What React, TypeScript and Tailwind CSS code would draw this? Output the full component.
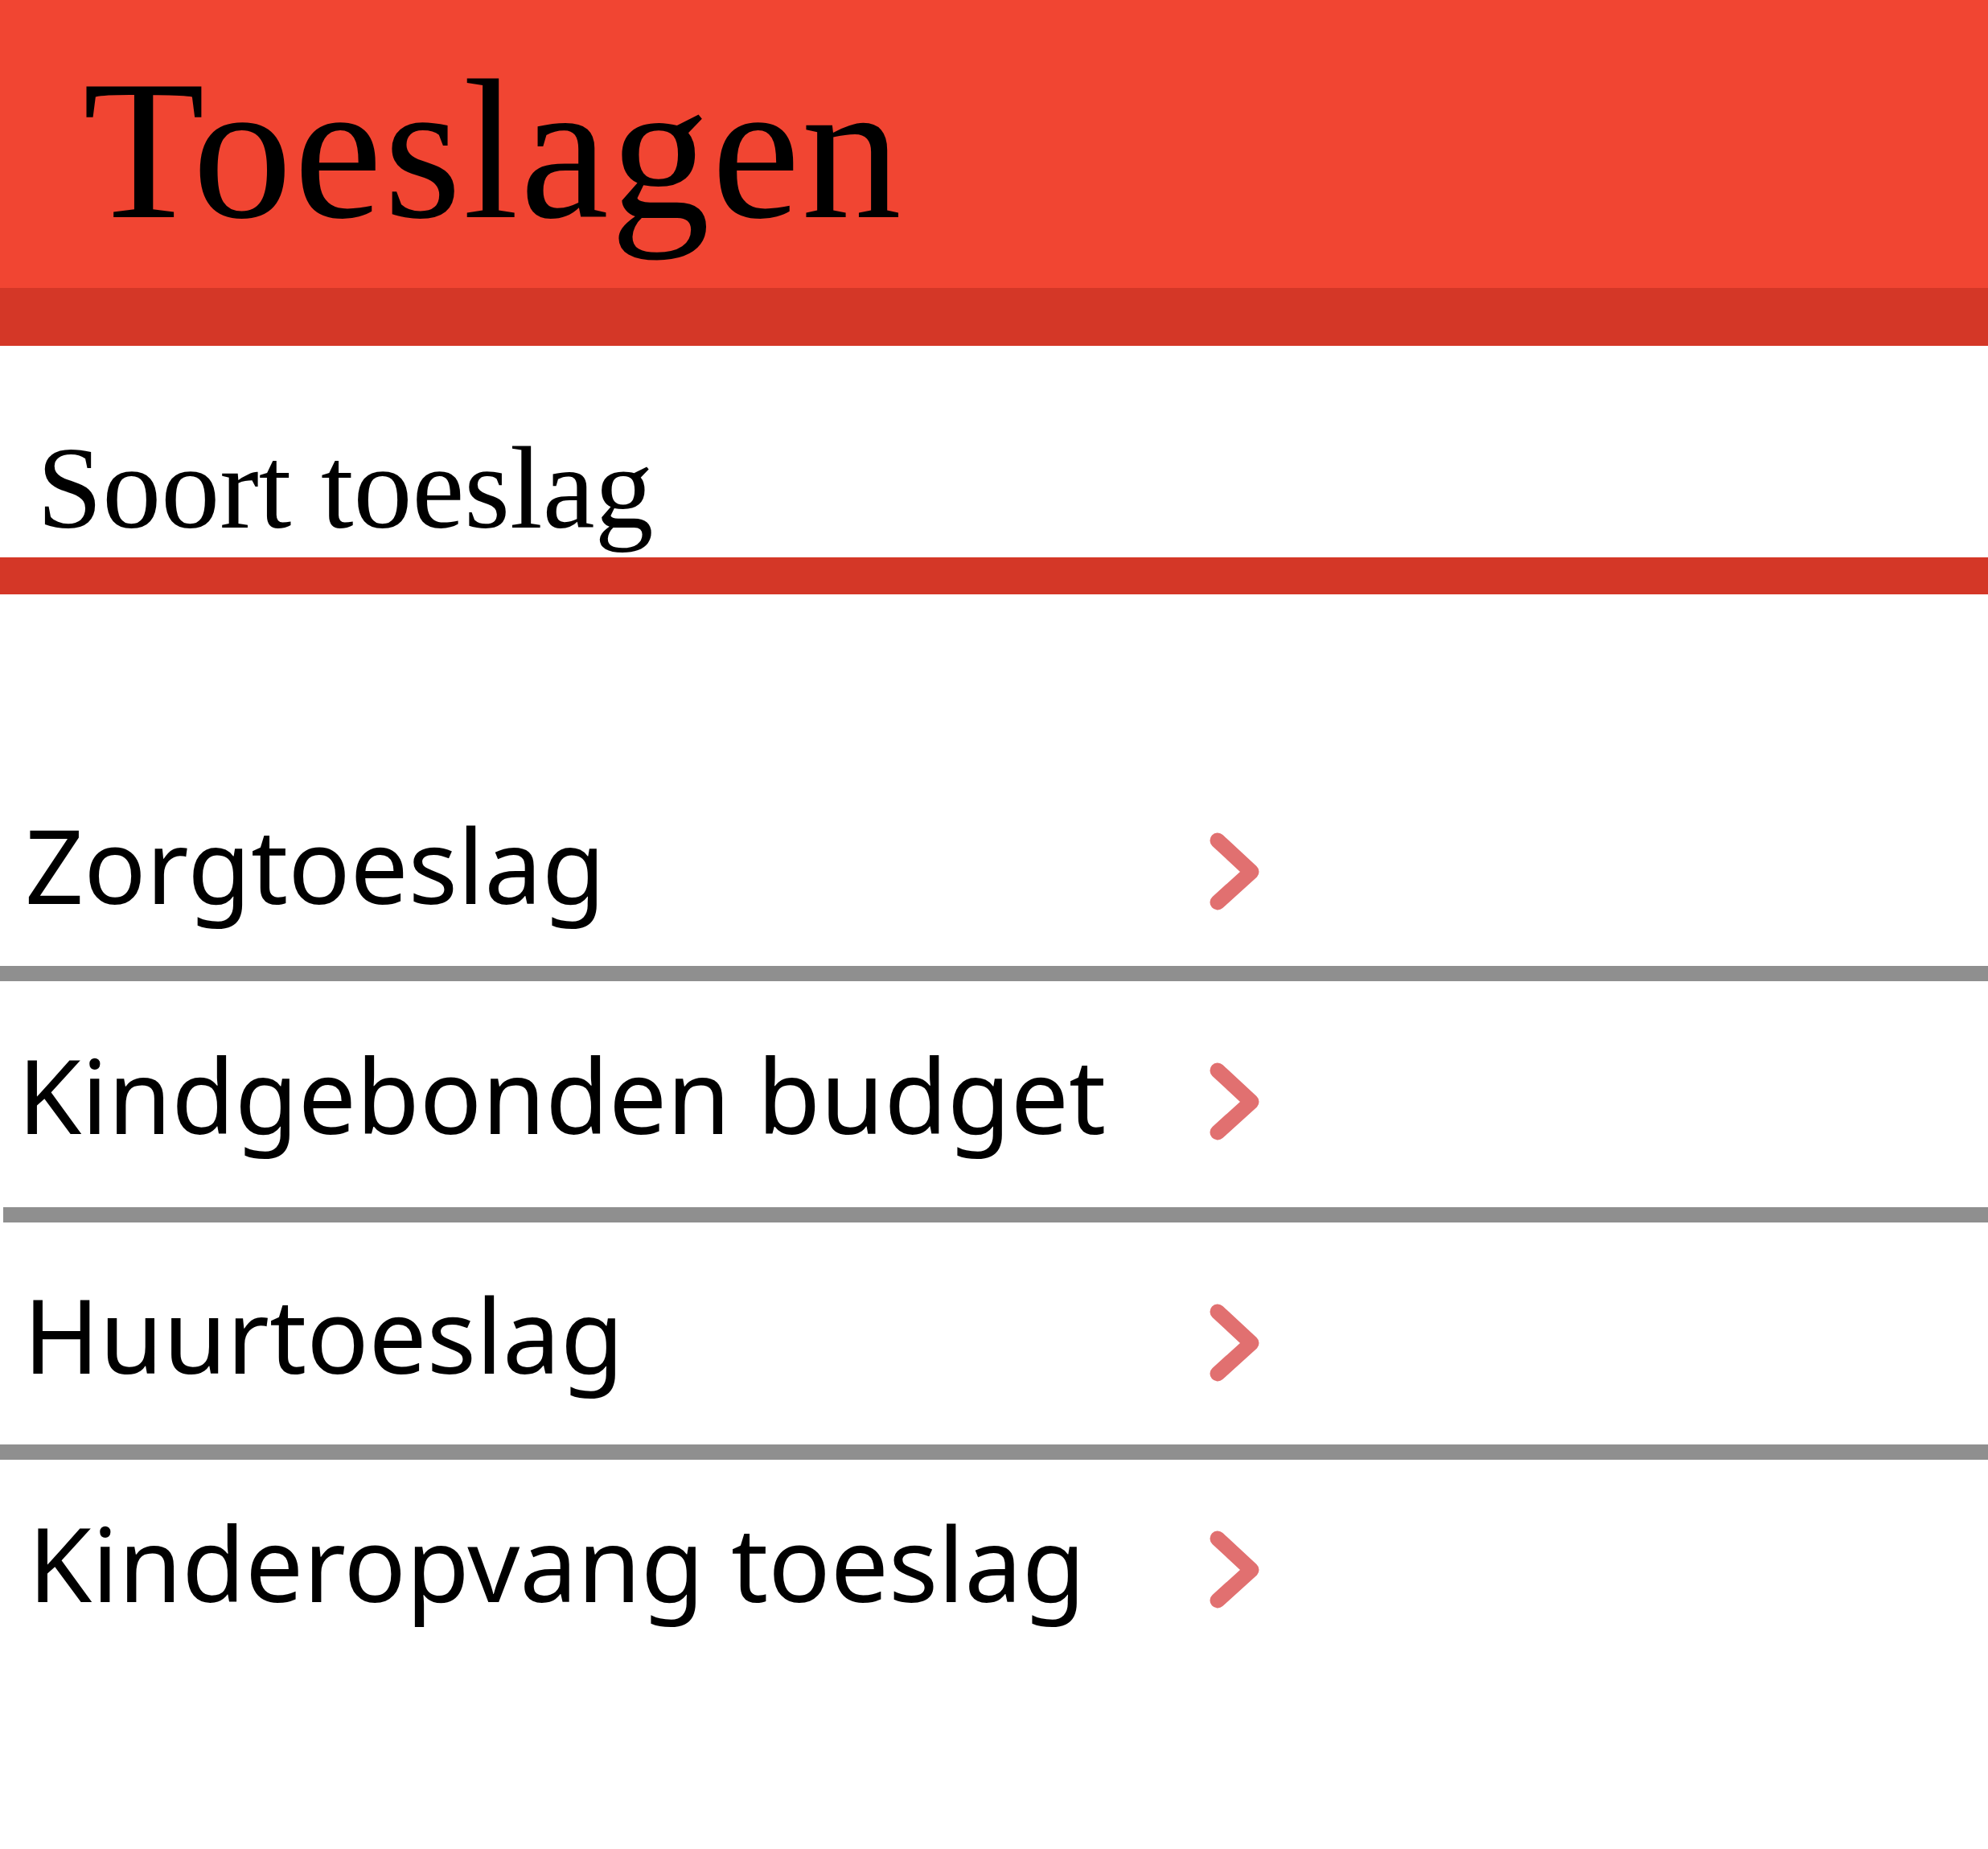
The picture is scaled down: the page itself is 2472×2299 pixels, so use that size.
import React from 'react'

// spacing is per row because the original isn't perfectly regular
const items = [
    { label: 'Zorgtoeslag', pad: 'pl-[31px]', top: 'pt-[296px]', bottom: 'pb-[68px]', text: 'mt-[-24px]', sep: 'ml-0' },
    { label: 'Kindgebonden budget', pad: 'pl-[22px]', top: 'pt-[101px]', bottom: 'pb-[82px]', text: 'mt-[-24px]', sep: 'ml-[4px]' },
    { label: 'Huurtoeslag', pad: 'pl-[29px]', top: 'pt-[101px]', bottom: 'pb-[77px]', text: 'mt-[-26px]', sep: 'ml-0' },
    { label: 'Kinderopvang toeslag', pad: 'pl-[35px]', top: 'pt-[88px]', bottom: 'pb-0', text: 'mt-[-24px]', sep: '' },
]

const Chevron = () => (
    <svg width="63" height="98" viewBox="0 0 63 98" fill="none">
        <polyline
            points="11,10 53,49 11,87"
            stroke="#e17070"
            strokeWidth="19"
            strokeLinecap="round"
            strokeLinejoin="round"
        />
    </svg>
)

const App = () => {
    return (
        <div className="min-h-screen bg-white">
            <header>
                <div className="h-[358px] bg-[#f14532] pl-[103px] pt-[63px]">
                    <h1 className="text-[248px] leading-none tracking-[2px] text-black font-['Liberation_Serif',serif]">Toeslagen</h1>
                </div>
                <div className="h-[72px] bg-[#d43727]" />
            </header>

            <div className="pt-[104px] pb-[13px] pl-[46px]">
                <h2 className="text-[146px] leading-none text-black font-['Liberation_Serif',serif]">Soort toeslag</h2>
            </div>
            <div className="h-[46px] bg-[#d43727]" />

            <ul className="font-['Noto_Sans',sans-serif]">
                {items.map((item) => (
                    <li key={item.label}>
                        <div className={`${item.top} ${item.bottom}`}>
                            <div className="grid h-[98px] grid-cols-[1503px_63px] items-start">
                                <span className={`${item.pad} ${item.text} block text-[128px] leading-none text-black`}>{item.label}</span>
                                <Chevron />
                            </div>
                        </div>
                        {item.sep !== '' && <div className={`${item.sep} h-[19px] bg-[#8f8f8f]`} />}
                    </li>
                ))}
            </ul>
        </div>
    )
}

export default App
